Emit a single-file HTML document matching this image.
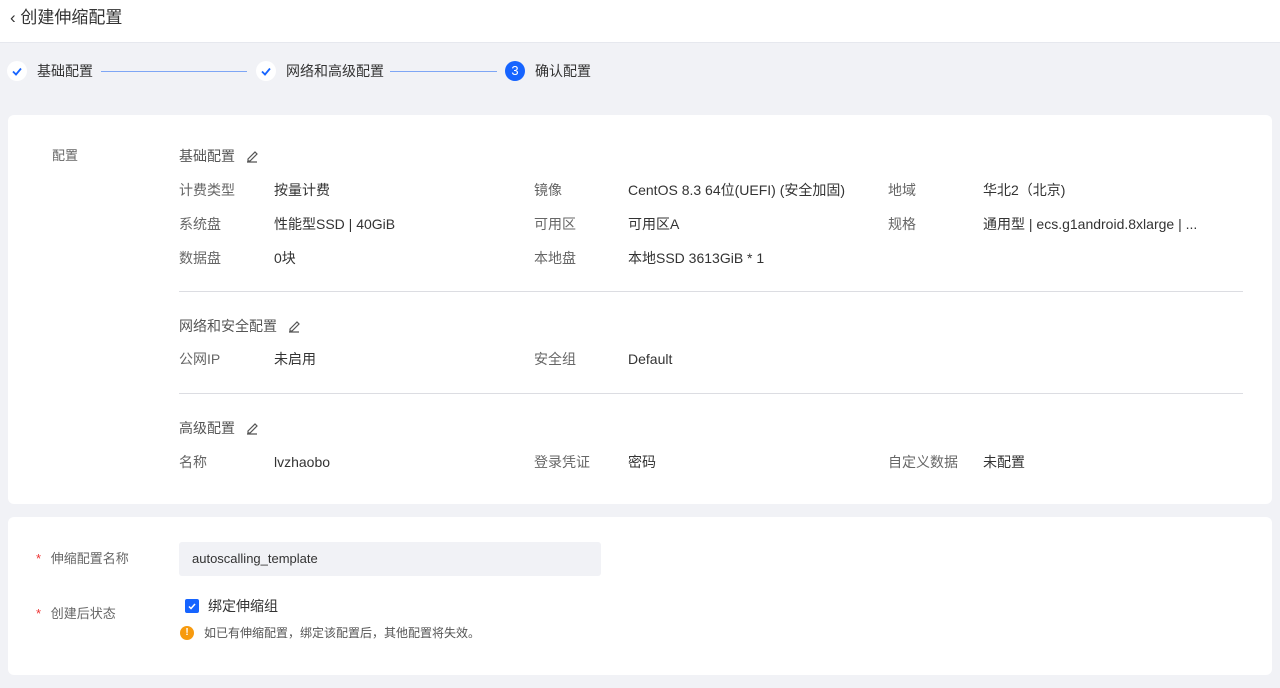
<!DOCTYPE html>
<html><head><meta charset="utf-8"><style>
*{margin:0;padding:0;box-sizing:border-box}
body{width:1280px;height:688px;background:#f1f2f6;font-family:"Liberation Sans","Noto Sans CJK SC",sans-serif;position:relative;overflow:hidden;color:#333}
.a{position:absolute;white-space:nowrap;line-height:20px}
.hdr{position:absolute;left:0;top:0;width:1280px;height:43px;background:#fff;border-bottom:1px solid #e6e8ee}
.card{position:absolute;left:8px;width:1264px;background:#fff;border-radius:6px}
.l{font-size:14px;color:#666}
.v{font-size:14px;color:#333}
.sec{font-size:14px;color:#555}
.circ{position:absolute;width:20px;height:20px;border-radius:50%;background:#fff;top:61px}
.line{position:absolute;top:71px;height:1px;background:#7ea6f5}
.hr{position:absolute;left:179px;width:1064px;height:1px;background:#dcdde2}
</style></head><body>
<div class="hdr"></div>
<div class="a" style="left:10px;top:7px;font-size:17px;line-height:22px;color:#333">‹&nbsp;创建伸缩配置</div>

<div class="circ" style="left:7px"><svg width="20" height="20"><path d="M6 10.5l3 3 5-6" stroke="#1664ff" stroke-width="1.8" fill="none"/></svg></div>
<div class="a" style="left:37px;top:61px;font-size:14px;color:#333">基础配置</div>
<div class="line" style="left:101px;width:146px"></div>
<div class="circ" style="left:256px"><svg width="20" height="20"><path d="M6 10.5l3 3 5-6" stroke="#1664ff" stroke-width="1.8" fill="none"/></svg></div>
<div class="a" style="left:286px;top:61px;font-size:14px;color:#333">网络和高级配置</div>
<div class="line" style="left:390px;width:107px"></div>
<div class="circ" style="left:505px;background:#1664ff;color:#fff;font-size:13px;text-align:center;line-height:20px">3</div>
<div class="a" style="left:535px;top:61px;font-size:14px;color:#333">确认配置</div>

<div class="card" style="top:115px;height:389px"></div>
<div class="a l" style="left:52px;top:146px;font-size:13px">配置</div>
<div class="a sec" style="left:179px;top:146px">基础配置 <svg width="14" height="14" style="margin-left:6px;vertical-align:-2px"><path d="M3 10l7-7 2 2-7 7H3z M2 13h10" stroke="#555" stroke-width="1.2" fill="none"/></svg></div>
<div class="a l" style="left:179px;top:180px">计费类型</div><div class="a v" style="left:274px;top:180px">按量计费</div>
<div class="a l" style="left:534px;top:180px">镜像</div><div class="a v" style="left:628px;top:180px">CentOS 8.3 64位(UEFI) (安全加固)</div>
<div class="a l" style="left:888px;top:180px">地域</div><div class="a v" style="left:983px;top:180px">华北2（北京)</div>
<div class="a l" style="left:179px;top:214px">系统盘</div><div class="a v" style="left:274px;top:214px">性能型SSD | 40GiB</div>
<div class="a l" style="left:534px;top:214px">可用区</div><div class="a v" style="left:628px;top:214px">可用区A</div>
<div class="a l" style="left:888px;top:214px">规格</div><div class="a v" style="left:983px;top:214px">通用型 | ecs.g1android.8xlarge | ...</div>
<div class="a l" style="left:179px;top:248px">数据盘</div><div class="a v" style="left:274px;top:248px">0块</div>
<div class="a l" style="left:534px;top:248px">本地盘</div><div class="a v" style="left:628px;top:248px">本地SSD 3613GiB * 1</div>
<div class="hr" style="top:291px"></div>
<div class="a sec" style="left:179px;top:316px">网络和安全配置 <svg width="14" height="14" style="margin-left:6px;vertical-align:-2px"><path d="M3 10l7-7 2 2-7 7H3z M2 13h10" stroke="#555" stroke-width="1.2" fill="none"/></svg></div>
<div class="a l" style="left:179px;top:349px">公网IP</div><div class="a v" style="left:274px;top:349px">未启用</div>
<div class="a l" style="left:534px;top:349px">安全组</div><div class="a v" style="left:628px;top:349px">Default</div>
<div class="hr" style="top:393px"></div>
<div class="a sec" style="left:179px;top:418px">高级配置 <svg width="14" height="14" style="margin-left:6px;vertical-align:-2px"><path d="M3 10l7-7 2 2-7 7H3z M2 13h10" stroke="#555" stroke-width="1.2" fill="none"/></svg></div>
<div class="a l" style="left:179px;top:452px">名称</div><div class="a v" style="left:274px;top:452px">lvzhaobo</div>
<div class="a l" style="left:534px;top:452px">登录凭证</div><div class="a v" style="left:628px;top:452px">密码</div>
<div class="a l" style="left:888px;top:452px">自定义数据</div><div class="a v" style="left:983px;top:452px">未配置</div>

<div class="card" style="top:517px;height:158px"></div>
<div class="a" style="left:36px;top:549px;font-size:13px;color:#e33"><span>*</span> <span style="color:#666;margin-left:6px">伸缩配置名称</span></div>
<div class="a" style="left:179px;top:542px;width:422px;height:34px;background:#f1f2f6;border-radius:3px;font-size:13px;color:#333;padding:7px 13px">autoscalling_template</div>
<div class="a" style="left:36px;top:604px;font-size:13px;color:#e33"><span>*</span> <span style="color:#666;margin-left:6px">创建后状态</span></div>
<div class="a" style="left:185px;top:599px;width:14px;height:14px;background:#1664ff;border-radius:2px"><svg width="14" height="14" style="display:block"><path d="M4 7.5l2 2 4-4.5" stroke="#fff" stroke-width="1.5" fill="none"/></svg></div>
<div class="a" style="left:208px;top:596px;font-size:14px;color:#333">绑定伸缩组</div>
<div class="a" style="left:180px;top:626px;width:14px;height:14px;border-radius:50%;background:#f79a0e;color:#fff;font-size:10px;font-weight:bold;text-align:center;line-height:14px">!</div>
<div class="a" style="left:204px;top:623px;font-size:12px;color:#555">如已有伸缩配置，绑定该配置后，其他配置将失效。</div>
</body></html>
